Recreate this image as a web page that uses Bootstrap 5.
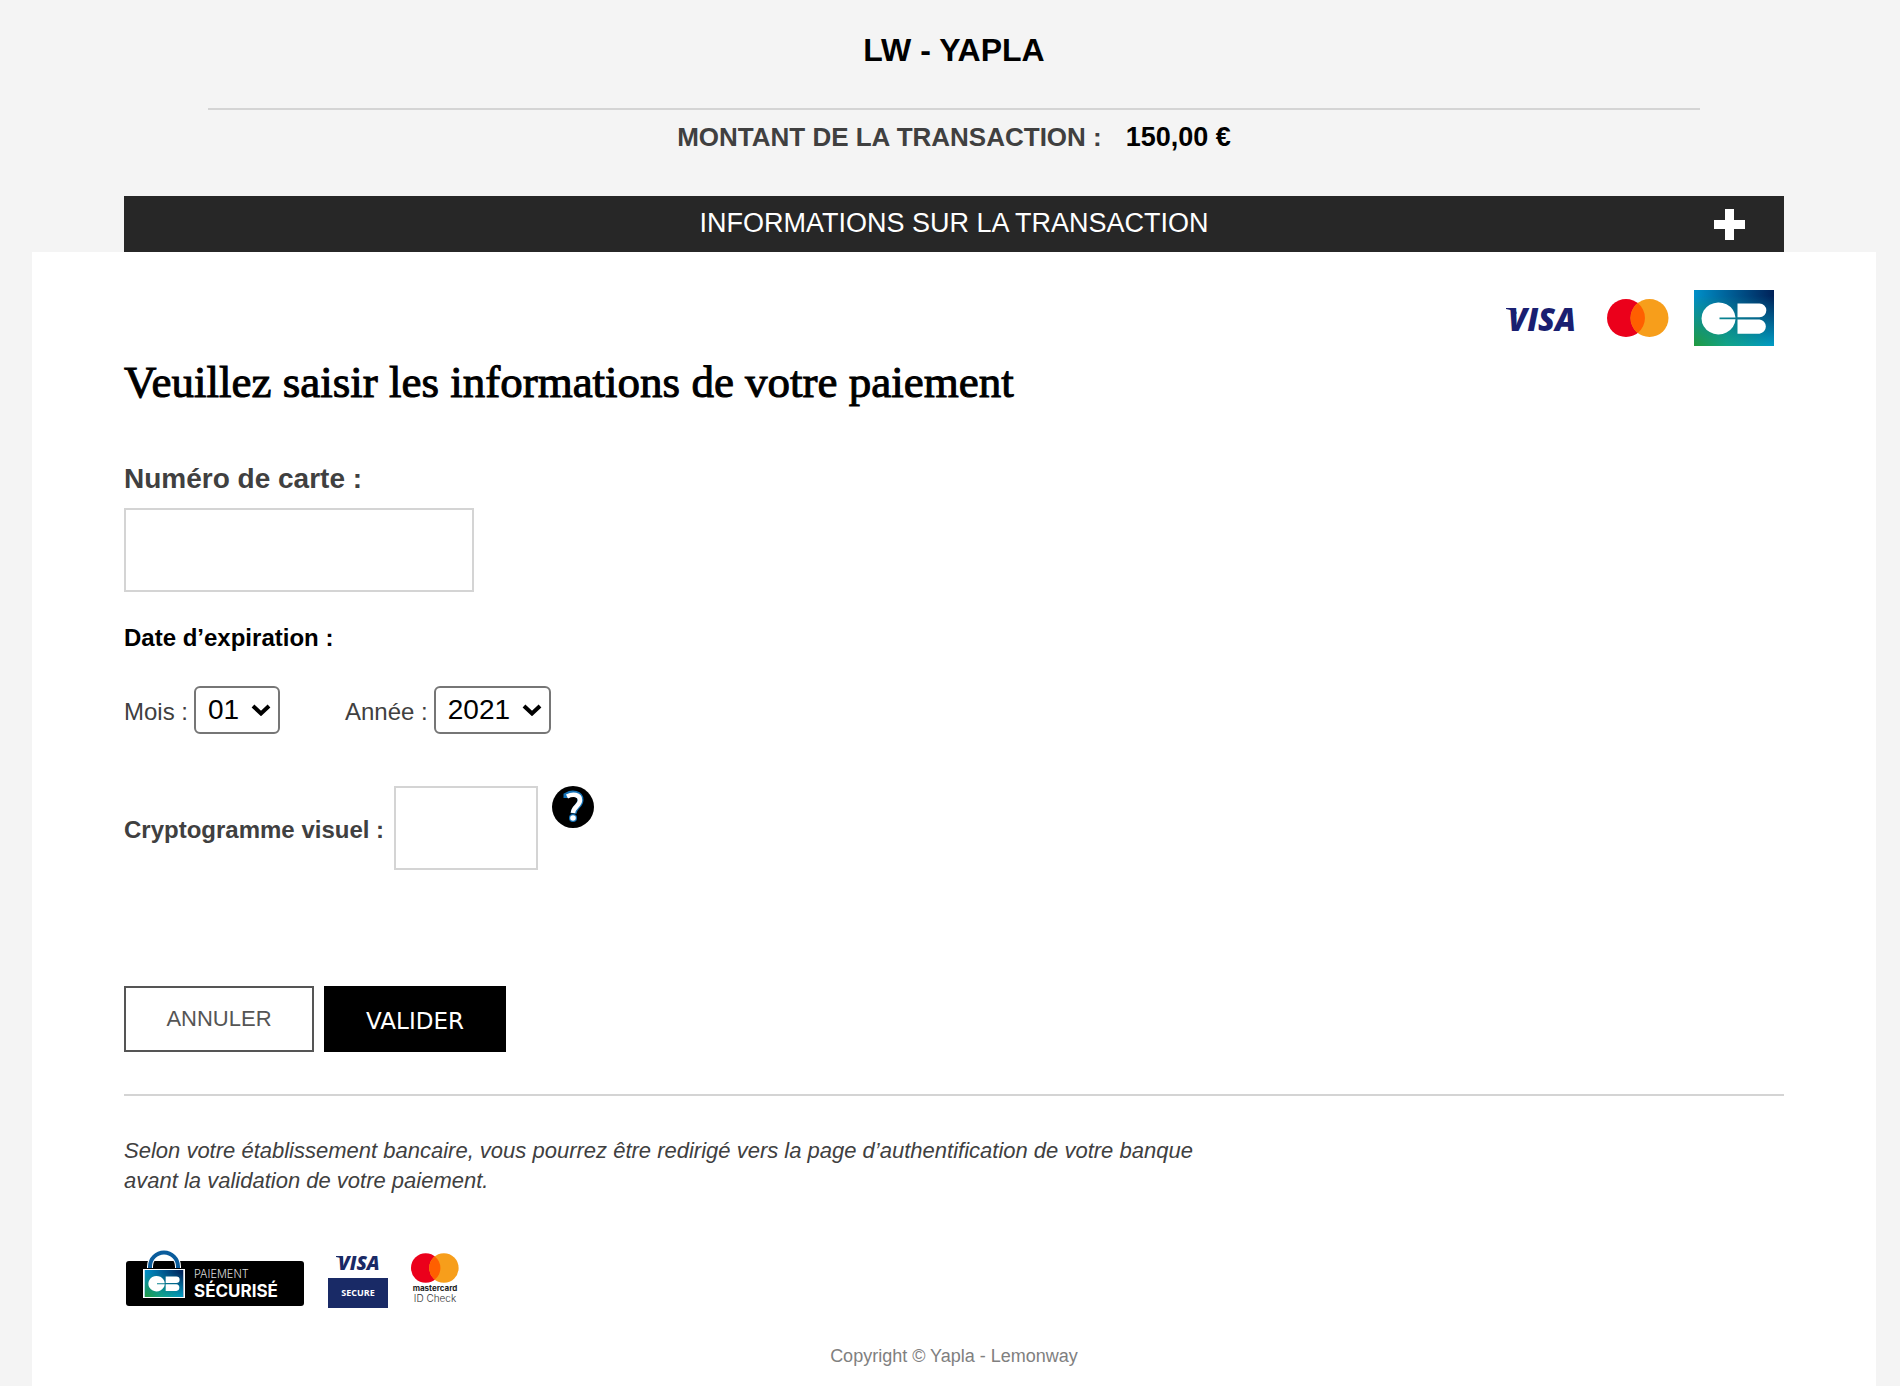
<!DOCTYPE html>
<html lang="fr">
<head>
<meta charset="utf-8">
<meta name="viewport" content="width=device-width, initial-scale=1">
<title>LW - YAPLA</title>
<link href="https://cdn.jsdelivr.net/npm/bootstrap@5.3.0/dist/css/bootstrap.min.css" rel="stylesheet">
<style>
  body { background: #f4f4f4; color: #404040; font-family: "Liberation Sans", Arial, sans-serif; font-size: 24px; line-height: 30px; padding: 0 24px 0 32px; }
  .inset { margin: 0 92px; }
  .shop-name { font-size: 32px; line-height: 40px; padding: 30px 0 38px; }
  .amount { margin: 0 176px 39px; padding-top: 7px; border-top: 2px solid #d4d4d4; font-size: 26px; line-height: 40px; column-gap: 24px; }
  .amount-value { font-size: 27px; }
  .info-bar { background: #272727; color: #fff; border: 0; height: 56px; font-size: 27px; padding: 0 39px 2px; }
  .info-bar svg { width: 31px; height: 31px; margin-top: 2px; }
  .info-bar .side { flex: 0 0 31px; }
  .panel { background: #fff; padding: 38px 92px 17px; }
  .brands { gap: 16px; padding-right: 10px; }
  .brands svg { width: 80px; height: 56px; }
  .pay-title { font-family: "Liberation Serif", "Times New Roman", serif; font-size: 45px; line-height: 48px; font-weight: 400; color: #000; -webkit-text-stroke: 1px #000; margin: 12px 0 56px; }
  .card-label { font-size: 28px; line-height: 34px; margin-bottom: 12px; }
  .pay-input { border: 2px solid #d4d4d4; border-radius: 0; height: 84px; font-size: 28px; }
  .w-number { width: 350px; }
  .w-code { width: 144px; }
  .expiry { margin-top: 31px; }
  .expiry legend { font-size: 24px; line-height: 30px; color: #000; margin-bottom: 33px; }
  .expiry .fields { column-gap: 65px; }
  .pair { gap: 6px; }
  .pair label { padding-top: 4px; }
  .date-select { width: auto; height: 48px; border: 2px solid #767676; border-radius: 6px; color: #000; font-size: 28px; line-height: 32px; padding: 4px 38px 4px 12px; background-position: right 7px center; background-size: 20px 12px; background-image: url("data:image/svg+xml,%3Csvg xmlns='http://www.w3.org/2000/svg' viewBox='0 0 20 12'%3E%3Cpath d='M2 2l8 7.500 8-7.500' fill='none' stroke='%23000' stroke-width='4'/%3E%3C/svg%3E"); }
  .crypto { margin-top: 52px; gap: 14px; }
  .crypto .pair { gap: 10px; }
  .help { width: 42px; height: 42px; }
  .help svg { display: block; }
  .actions { margin-top: 116px; gap: 10px; }
  .act { height: 66px; border-radius: 0; border: 2px solid #555; font-size: 22px; line-height: 30px; padding: 16px 20px; color: #555; background: #fff; }
  .act-cancel { width: 190px; }
  .act-ok { width: 182px; background: #000; border-color: #000; color: #fff; font-family: Verdana, "DejaVu Sans", sans-serif; font-size: 23px; padding: 18px 20px 14px; }
  .notice { margin-top: 42px; border-top: 2px solid #d4d4d4; padding-top: 40px; font-size: 22px; font-style: italic; }
  .notice p { max-width: 1140px; }
  .seals { margin-top: 54px; gap: 22px; }
  .copy { margin-top: 33px; font-size: 18px; line-height: 26px; color: #808080; }
</style>
<script src="https://cdn.jsdelivr.net/npm/bootstrap@5.3.0/dist/js/bootstrap.bundle.min.js"></script>
</head>
<body class="min-vh-100 d-flex flex-column">
<svg width="0" height="0" class="position-absolute" aria-hidden="true">
  <defs>
    <linearGradient id="cbBase" x1="0" y1="0" x2="1" y2="0"><stop offset="0" stop-color="#0090c8"/><stop offset="1" stop-color="#002158"/></linearGradient>
    <linearGradient id="cbLow" x1="0" y1="0" x2="1" y2="0"><stop offset="0" stop-color="#229a3c"/><stop offset=".4" stop-color="#13a585"/><stop offset="1" stop-color="#009cc6"/></linearGradient>
    <linearGradient id="cbFade" x1="0" y1="0" x2="0" y2="1"><stop offset=".1" stop-color="#000"/><stop offset="1" stop-color="#fff"/></linearGradient>
    <mask id="cbMask" maskContentUnits="objectBoundingBox"><rect width="1" height="1" fill="url(#cbFade)"/></mask>
    <symbol id="cb" viewBox="0 0 80 56">
      <rect width="80" height="56" fill="url(#cbBase)"/>
      <rect width="80" height="56" fill="url(#cbLow)" mask="url(#cbMask)"/>
      <path fill="#fff" d="M41.500 27.500H25.500v1.800h16A17 16 0 1 1 41.500 27.500zM43.500 13.500h22a6.800 6.800 0 0 1 0 13.700H43.500zM43.500 29.400h22a7.200 7.200 0 0 1 0 14.300H43.500z"/>
    </symbol>
    <symbol id="mc" viewBox="0 0 62 38">
      <circle cx="19" cy="19" r="19" fill="#eb001b"/><circle cx="42.500" cy="19" r="19" fill="#f79e1b"/>
      <path fill="#ff5f00" d="M30.750 4.100a19 19 0 0 1 0 29.800 19 19 0 0 1 0-29.800z"/>
    </symbol>
  </defs>
</svg>

<header>
  <div class="inset">
    <h1 class="shop-name fw-bold text-black text-center m-0">LW - YAPLA</h1>
  </div>
  <div class="amount fw-bold d-flex flex-wrap justify-content-center">
    <span>MONTANT DE LA TRANSACTION :</span>
    <span class="amount-value text-black">150,00 €</span>
  </div>
  <div class="inset">
    <button type="button" class="info-bar w-100 d-flex align-items-center">
      <span class="side"></span>
      <span class="flex-grow-1 text-center">INFORMATIONS SUR LA TRANSACTION</span>
      <svg class="side" viewBox="0 0 31 31" aria-hidden="true"><path fill="#fff" d="M11 0h9v11h11v9H20v11h-9V20H0v-9h11z"/></svg>
    </button>
  </div>
</header>

<main class="panel flex-grow-1">
  <div class="brands d-flex justify-content-end">
    <svg viewBox="0 0 80 56" role="img" aria-label="Visa"><text x="6" y="41" font-family="Open Sans, sans-serif" font-size="31" font-weight="800" font-style="italic" fill="#1a1f71">VISA</text><path fill="#1a1f71" d="M4 18h9l2 6q-4-4-11-5z"/></svg>
    <svg viewBox="0 0 80 56" role="img" aria-label="Mastercard"><use href="#mc" x="9" y="9" width="62" height="38"/></svg>
    <svg role="img" aria-label="CB"><use href="#cb" width="80" height="56"/></svg>
  </div>

  <h2 class="pay-title">Veuillez saisir les informations de votre paiement</h2>

  <form>
    <label for="number" class="card-label d-block fw-bold">Numéro de carte :</label>
    <input id="number" type="text" class="form-control pay-input w-number" inputmode="numeric">

    <fieldset class="expiry">
      <legend class="fw-bold">Date d’expiration :</legend>
      <div class="fields d-flex flex-wrap">
        <div class="pair d-flex align-items-center">
          <label for="month">Mois :</label>
          <select id="month" class="form-select date-select"><option>01</option><option>02</option><option>03</option><option>04</option><option>05</option><option>06</option><option>07</option><option>08</option><option>09</option><option>10</option><option>11</option><option>12</option></select>
        </div>
        <div class="pair d-flex align-items-center">
          <label for="year">Année :</label>
          <select id="year" class="form-select date-select"><option>2021</option><option>2022</option><option>2023</option><option>2024</option><option>2025</option></select>
        </div>
      </div>
    </fieldset>

    <div class="crypto d-flex align-items-start">
      <div class="pair d-flex align-items-center">
        <label for="code" class="fw-bold">Cryptogramme visuel :</label>
        <input id="code" type="text" class="form-control pay-input w-code" inputmode="numeric">
      </div>
      <button type="button" class="help btn p-0 border-0" aria-label="Aide">
        <svg width="42" height="42" viewBox="0 0 42 42"><circle cx="21" cy="21" r="21"/><g fill="none"><path d="M14.500 12V9.500c6-3.500 14-2 14 4.500 0 6-6.500 6.500-7 13.500" stroke="#1573b8" stroke-width="6"/><circle cx="21" cy="32" r="4" fill="#1573b8"/><path d="M15 10.500c6-3 13-2 13 3.500 0 6-6.500 6-7 13" stroke="#fff" stroke-width="4.500"/><circle cx="21" cy="32" r="2.800" fill="#fff"/></g></svg>
      </button>
    </div>

    <div class="actions d-flex flex-wrap">
      <button type="button" class="act act-cancel">ANNULER</button>
      <button type="submit" class="act act-ok">VALIDER</button>
    </div>
  </form>

  <div class="notice"><p class="m-0">Selon votre établissement bancaire, vous pourrez être redirigé vers la page d’authentification de votre banque<br>avant la validation de votre paiement.</p></div>

  <div class="seals d-flex">
    <svg width="182" height="60" viewBox="0 0 182 60" role="img" aria-label="Paiement sécurisé CB">
      <rect x="2" y="11" width="178" height="45" rx="3"/>
      <path d="M26 18v-1.500a14 14 0 0 1 28 0V18" fill="none" stroke="#fff" stroke-width="6"/>
      <path d="M26 18v-1.500a14 14 0 0 1 28 0V18" fill="none" stroke="#0a5c9c" stroke-width="4"/>
      <rect x="19" y="19" width="42" height="29" fill="#fff"/>
      <use href="#cb" x="20" y="20" width="40" height="27"/>
      <text x="70" y="28" font-family="Inter, sans-serif" font-size="11" font-weight="300" fill="#ddd">PAIEMENT</text>
      <text x="70" y="47" font-family="Inter, sans-serif" font-size="17" font-weight="700" fill="#fff">SÉCURISÉ</text>
    </svg>
    <svg width="60" height="60" viewBox="0 0 60 60" role="img" aria-label="Visa Secure">
      <text x="10" y="20" font-family="Open Sans, sans-serif" font-size="19" font-weight="800" font-style="italic" fill="#1a2a66">VISA</text><path fill="#1a2a66" d="M8 6h6l1 4q-3-3-7-3z"/>
      <rect y="28" width="60" height="30" fill="#192a66"/>
      <text x="30" y="46" text-anchor="middle" font-family="Open Sans, sans-serif" font-size="9" font-weight="700" fill="#fff">SECURE</text>
    </svg>
    <svg width="50" height="60" viewBox="0 0 50 60" role="img" aria-label="Mastercard ID Check">
      <use href="#mc" x="1" y="3" width="48" height="30"/>
      <text x="25" y="41" text-anchor="middle" font-family="Inter, sans-serif" font-size="8" font-weight="700" fill="#222">mastercard</text>
      <text x="25" y="52" text-anchor="middle" font-family="Inter, sans-serif" font-size="10" font-weight="300" fill="#333">ID Check</text>
    </svg>
  </div>

  <footer class="copy text-center">Copyright © Yapla - Lemonway</footer>
</main>
</body>
</html>
